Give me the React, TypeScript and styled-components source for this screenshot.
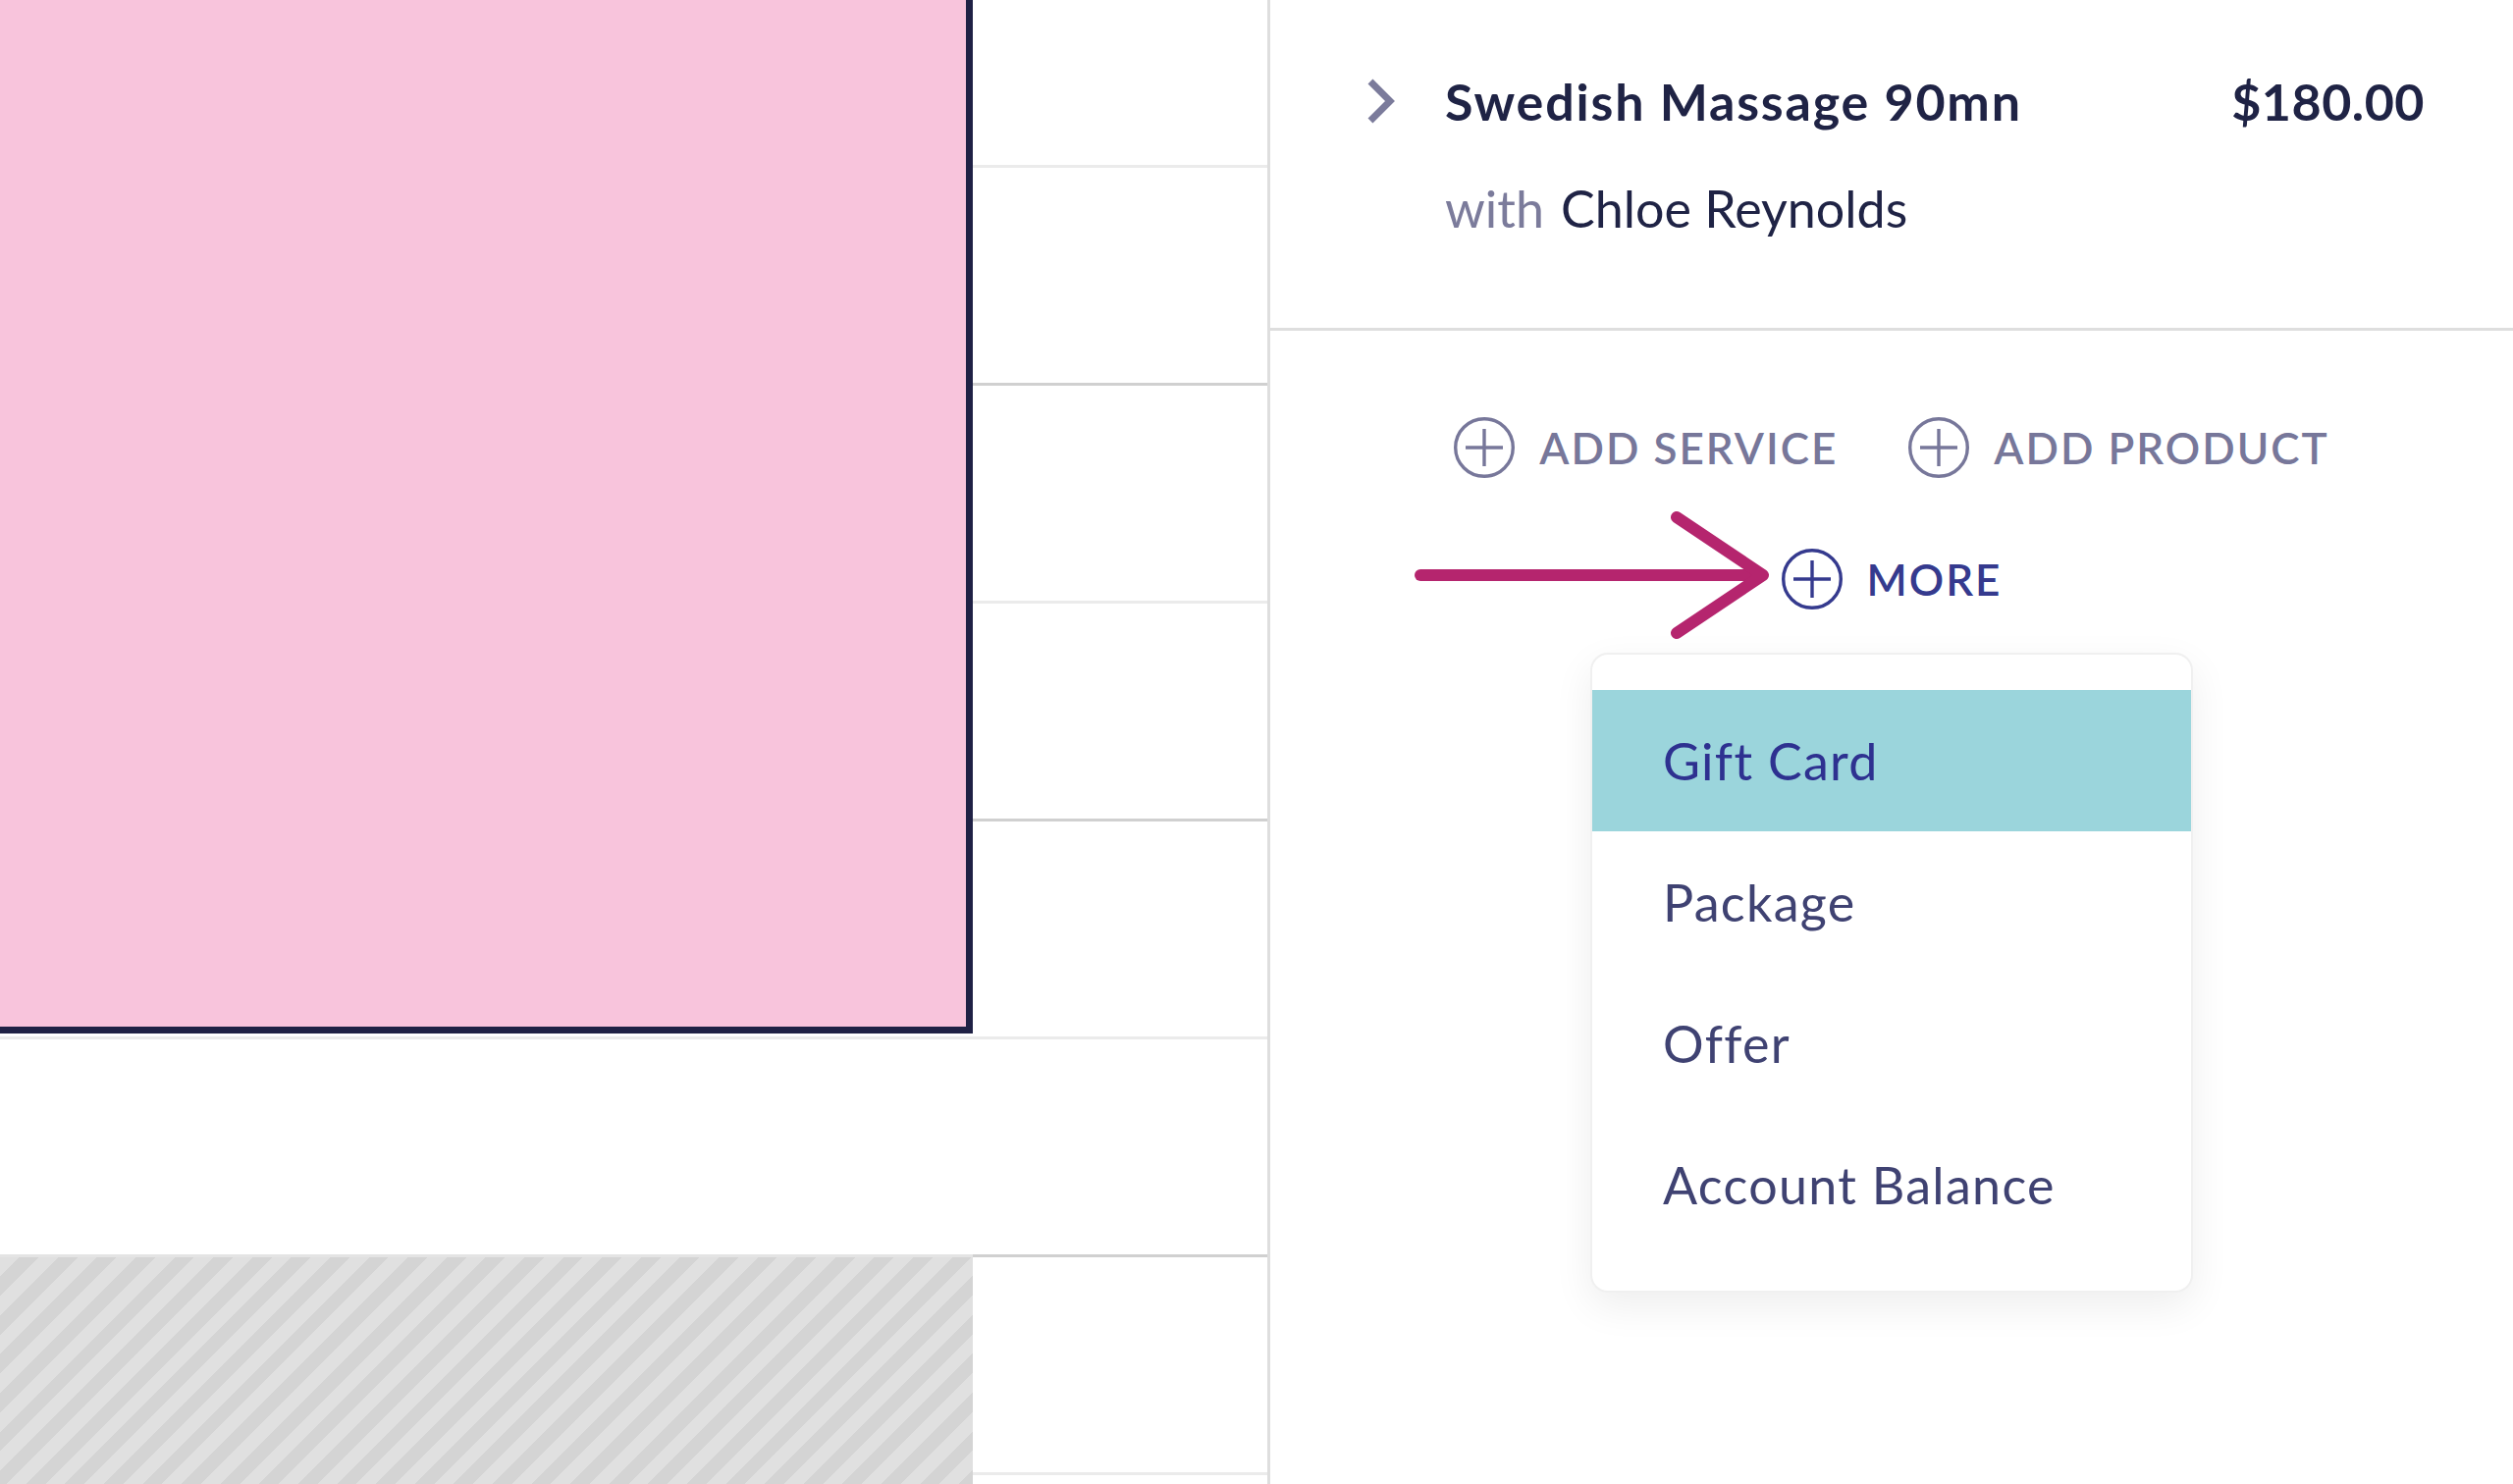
import React from 'react'
import styled, { createGlobalStyle } from 'styled-components'

const GlobalStyle = createGlobalStyle`
  html, body {
    margin: 0;
    padding: 0;
    background: #ffffff;
    font-family: Lato, 'Liberation Sans', sans-serif;
  }
  * {
    box-sizing: border-box;
  }
`

const Screen = styled.div`
  display: flex;
  width: 2560px;
  height: 1512px;
  overflow: hidden;
  background: #ffffff;
`

const Calendar = styled.section`
  position: relative;
  width: 1294px;
  height: 100%;
  flex-shrink: 0;
  border-right: 3px solid #dedede;
  display: flex;
  flex-direction: column;
  overflow: hidden;
`

const Slot = styled.div<{ $height: number; $strong?: boolean }>`
  flex-shrink: 0;
  height: ${(p) => p.$height}px;
  border-bottom: 3px solid ${(p) => (p.$strong ? '#d0d0d0' : '#ebebeb')};
`

const Appointment = styled.div`
  position: absolute;
  top: 0;
  left: 0;
  width: 991px;
  height: 1053px;
  background: #f8c4dc;
  border-right: 7px solid #1f2145;
  border-bottom: 7px solid #1f2145;
`

const Blocked = styled.div`
  position: absolute;
  top: 1278px;
  left: 0;
  width: 991px;
  bottom: 0;
  border-top: 3px solid #e4e4e4;
  background: repeating-linear-gradient(
    135deg,
    #e0e0e0 0px,
    #e0e0e0 14px,
    #d4d4d4 14px,
    #d4d4d4 28px
  );
`

const Panel = styled.aside`
  position: relative;
  flex: 1;
  display: flex;
  flex-direction: column;
`

const Header = styled.header`
  height: 337px;
  flex-shrink: 0;
  border-bottom: 3px solid #dedede;
  padding: 72px 90px 0 97px;
  display: grid;
  grid-template-columns: 81px 1fr auto;
  grid-template-rows: 62px 62px;
  row-gap: 47px;
  align-items: center;
`

const Chevron = styled.svg`
  display: block;
`

const Title = styled.div`
  font-size: 52px;
  line-height: 62px;
  font-weight: 700;
  letter-spacing: 1.8px;
  color: #1f2345;
`

const Price = styled.div`
  font-size: 52px;
  line-height: 62px;
  font-weight: 700;
  letter-spacing: 0.5px;
  color: #1f2345;
`

const Provider = styled.div`
  grid-column: 2 / 4;
  font-size: 52px;
  line-height: 62px;
  color: #1f2345;

  span {
    color: #7b7b9b;
    margin-right: 17px;
  }
`

const Actions = styled.div`
  display: flex;
  flex-direction: column;
  align-items: center;
  padding-top: 88px;
`

const ActionRow = styled.div<{ $gap?: number }>`
  display: flex;
  align-items: center;
  gap: 72px;
  margin-top: ${(p) => p.$gap || 0}px;
`

const ActionButton = styled.button<{ $active?: boolean }>`
  display: flex;
  align-items: center;
  gap: 25px;
  padding: 0;
  border: none;
  background: none;
  font-family: inherit;
  font-size: 44px;
  line-height: 62px;
  font-weight: 600;
  letter-spacing: 2px;
  text-transform: uppercase;
  color: ${(p) => (p.$active ? '#353a8e' : '#77779a')};
  cursor: pointer;
`

const Menu = styled.ul`
  list-style: none;
  margin: 44px 0 0;
  width: 614px;
  padding: 36px 0 36px;
  background: #ffffff;
  border: 2px solid #f0f0f0;
  border-radius: 18px;
  box-shadow: 0 14px 40px rgba(0, 0, 0, 0.07);
`

const MenuItem = styled.li<{ $selected?: boolean }>`
  height: 144px;
  display: flex;
  align-items: center;
  padding-left: 72px;
  font-size: 52px;
  letter-spacing: 1.3px;
  color: ${(p) => (p.$selected ? '#2e3190' : '#3f4272')};
  background: ${(p) => (p.$selected ? '#9bd5dc' : 'transparent')};
`

const Pointer = styled.svg`
  position: absolute;
  left: 140px;
  top: 515px;
  pointer-events: none;
`

const PlusCircle = ({ color }: { color: string }) => (
  <svg width="62" height="62" viewBox="0 0 62 62">
    <circle cx="31" cy="31" r="29.3" fill="none" stroke={color} strokeWidth="3.4" />
    <line x1="12" y1="31" x2="50" y2="31" stroke={color} strokeWidth="3.4" />
    <line x1="31" y1="12" x2="31" y2="50" stroke={color} strokeWidth="3.4" />
  </svg>
)

const slots = [
  { height: 171, strong: false },
  { height: 222, strong: true },
  { height: 222, strong: false },
  { height: 222, strong: true },
  { height: 222, strong: false },
  { height: 222, strong: true },
  { height: 222, strong: false },
]

const menuItems = ['Gift Card', 'Package', 'Offer', 'Account Balance']

export default class App extends React.Component {
  state = {
    selected: 'Gift Card',
  }

  render() {
    return (
      <Screen>
        <GlobalStyle />
        <Calendar>
          {slots.map((s, i) => (
            <Slot key={i} $height={s.height} $strong={s.strong} />
          ))}
          <Appointment />
          <Blocked />
        </Calendar>

        <Panel>
          <Header>
            <Chevron width="30" height="46" viewBox="0 0 30 46">
              <polyline
                points="5,3 25,23 5,43"
                fill="none"
                stroke="#7b7b9b"
                strokeWidth="7"
              />
            </Chevron>
            <Title>Swedish Massage 90mn</Title>
            <Price>$180.00</Price>
            <span />
            <Provider>
              <span>with</span>Chloe Reynolds
            </Provider>
          </Header>

          <Actions>
            <ActionRow>
              <ActionButton>
                <PlusCircle color="#77779a" />
                Add Service
              </ActionButton>
              <ActionButton>
                <PlusCircle color="#77779a" />
                Add Product
              </ActionButton>
            </ActionRow>
            <ActionRow $gap={72}>
              <ActionButton $active>
                <PlusCircle color="#353a8e" />
                More
              </ActionButton>
            </ActionRow>
            <Menu>
              {menuItems.map((item) => (
                <MenuItem key={item} $selected={item === this.state.selected}>
                  {item}
                </MenuItem>
              ))}
            </Menu>
          </Actions>

          <Pointer width="375" height="140" viewBox="0 0 375 140">
            <g
              fill="none"
              stroke="#b5256e"
              strokeWidth="12"
              strokeLinecap="round"
              strokeLinejoin="round"
            >
              <line x1="13" y1="71" x2="360" y2="71" />
              <polyline points="274,12 362,71 274,130" />
            </g>
          </Pointer>
        </Panel>
      </Screen>
    )
  }
}
